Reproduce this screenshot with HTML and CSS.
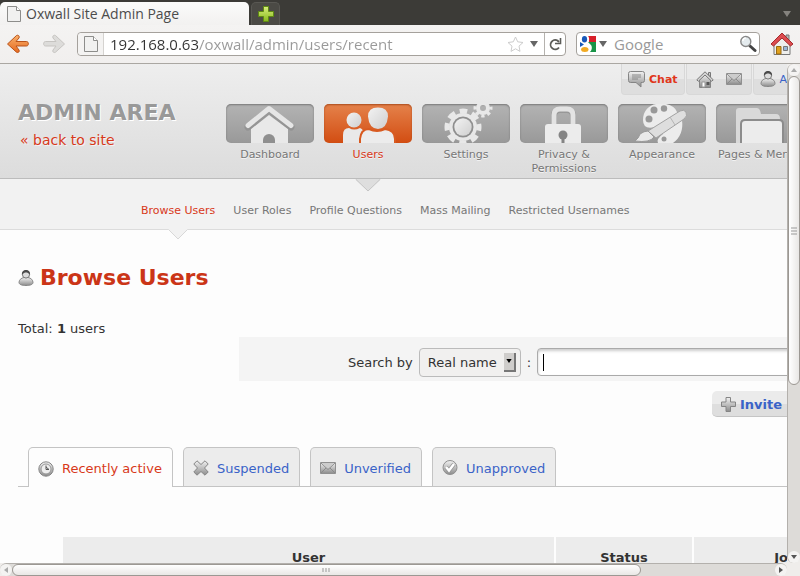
FILE: index.html
```html
<!DOCTYPE html>
<html lang="en">
<head>
<meta charset="utf-8">
<title>Oxwall Site Admin Page</title>
<link rel="stylesheet" href="styles.css">
</head>
<body>
<svg class="defs" aria-hidden="true">
  <defs>
    <linearGradient id="grey" x1="0" y1="0" x2="0" y2="1"><stop offset="0" stop-color="#f2f2f2"/><stop offset="1" stop-color="#8c8c8c"/></linearGradient>
    <linearGradient id="pale" x1="0" y1="0" x2="1" y2="1"><stop offset="0" stop-color="#f3f3f3"/><stop offset="1" stop-color="#cfcfcf"/></linearGradient>
    <linearGradient id="orange" x1="0" y1="0" x2="0" y2="1"><stop offset="0" stop-color="#f9b06b"/><stop offset="1" stop-color="#e66a20"/></linearGradient>
    <linearGradient id="lime" x1="0" y1="0" x2="0" y2="1"><stop offset="0" stop-color="#d8ee7c"/><stop offset="1" stop-color="#86b81c"/></linearGradient>
    <symbol id="sheet" viewBox="0 0 14 16"><path d="M.5.5h9l4 4v11H.5z" fill="#f1f1f0" stroke="#8d8d8b"/><path d="M9.500.5v4h4" fill="#fff" stroke="#8d8d8b"/></symbol>
    <symbol id="person" viewBox="0 0 16 18"><path d="M1 13.500c0-2.500 2-4.500 5-5h4c3 .5 5 2.500 5 5 0 2-3 3-7 3s-7-1-7-3z" fill="url(#grey)" stroke="#888"/><circle cx="8" cy="5.500" r="3.600" fill="#dcdcdc" stroke="#777"/><path d="M4 6C3.500 2.500 5.500 1 8 1s4.500 1.500 4 5C11 4 9 3.500 8 3.500S5 4 4 6z" fill="#4b4b4b"/></symbol>
    <symbol id="mail" viewBox="0 0 16 12"><path d="M.5.5h15v11H.5z" fill="url(#grey)" stroke="#909090"/><path d="M1 1l7 6.500L15 1M1 11l5-5M15 11l-5-5" fill="none" stroke="#8a8a8a"/><path d="M1.500 1h13L8 6.500z" fill="#ccc"/></symbol>
    <symbol id="down" viewBox="0 0 8 6"><path d="M0 0h8L4 6z" fill="currentColor"/></symbol>
  </defs>
</svg>

<div class="titlebar">
  <div class="window-tab"><svg width="14" height="16"><use href="#sheet"/></svg><span>Oxwall Site Admin Page</span></div>
  <button class="new-tab" aria-label="New tab"><svg width="16" height="16" viewBox="0 0 16 16"><path d="M5.500.5h5v5h5v5h-5v5h-5v-5h-5v-5h5z" fill="url(#lime)" stroke="#5f8a12"/></svg></button>
  <button class="all-tabs" aria-label="List all tabs"><svg width="8" height="6"><use href="#down"/></svg></button>
</div>

<div class="toolbar">
  <button class="plain" aria-label="Back"><svg width="24" height="20" viewBox="0 0 24 20"><path d="M10.500 1.500c1.500-1 3.500.7 2.500 2.500L10 7.500h10.500c2.500 0 2.500 4.500 0 4.500H10l3 4c1 1.800-1 3.200-2.500 2.200L1.500 10z" fill="url(#orange)" stroke="#b9531a"/></svg></button>
  <button class="plain forward" aria-label="Forward"><svg width="24" height="20" viewBox="0 0 24 20"><path d="M13.500 1.500c-1.500-1-3.500.7-2.500 2.500l3 3.500H3.500C1 7.500 1 12 3.500 12H14l-3 4c-1 1.800 1 3.200 2.500 2.200l9-8.200z" fill="#dddcda" stroke="#c6c4c1"/></svg></button>
  <form class="address">
    <span class="identity"><svg width="14" height="16"><use href="#sheet"/></svg></span>
    <input class="url" type="text" aria-label="Address" value="192.168.0.63/oxwall/admin/users/recent">
    <button type="button" class="plain" aria-label="Bookmark this page"><svg width="17" height="16" viewBox="0 0 17 16"><path d="M8.500 1l2.200 4.800 5.300.7-4 3.600 1 5.300-4.500-2.600L4 15.400l1-5.300-4-3.600 5.300-.7z" fill="#fff" stroke="#ccc"/></svg></button>
    <button type="button" class="plain" aria-label="Show history"><svg width="8" height="6"><use href="#down"/></svg></button>
    <button type="button" class="reload" aria-label="Reload"><svg width="13" height="14" viewBox="0 0 13 14"><path d="M10 10.500A4.700 4.700 0 1 1 8.500 3.500L10 5" fill="none" stroke="#5c5c58" stroke-width="1.800"/><path d="M11.500 1v5.500H6" fill="none" stroke="#5c5c58" stroke-width="1.600"/></svg></button>
  </form>
  <form class="web-search">
    <button type="button" class="plain engine" aria-label="Choose search engine"><svg width="16" height="16" viewBox="0 0 16 16"><path fill="#fff" d="M0 0h16v16H0z"/><path d="M8 0h8v6H9z" fill="#d8202a"/><path d="M8 6h8v10H8z" fill="#189447"/><path d="M8 0c2 3 1 5 0 6l3 3c2 3 0 6-1 7H7l1-5-4-3 3-2z" fill="#fff"/><ellipse cx="4.500" cy="3.200" rx="2.600" ry="3.200" fill="#1858b8"/><path d="M0 6l4 2.500L0 11z" fill="#1858b8"/><ellipse cx="4.800" cy="13.500" rx="3.700" ry="2.500" fill="#f2aa22"/></svg><svg width="8" height="6"><use href="#down"/></svg></button>
    <input type="text" aria-label="Search the web" placeholder="Google">
    <button type="button" class="plain" aria-label="Search"><svg width="18" height="18" viewBox="0 0 18 18"><path d="M11 11l5 4.500" stroke="#444" stroke-width="3" stroke-linecap="round"/><circle cx="6.800" cy="6.500" r="5" fill="#e4ebee" stroke="#888" stroke-width="1.400"/><path d="M3.800 6a3 3 0 0 1 3-3" fill="none" stroke="#fff" stroke-width="1.500"/></svg></button>
  </form>
  <button class="plain home" aria-label="Home"><svg width="24" height="24" viewBox="0 0 24 24"><path d="M16 3h3v6h-3z" fill="#b8b8b4" stroke="#777"/><path d="M4 11l8-8 8 8v11.500H4z" fill="#eeeeec" stroke="#777"/><path d="M6.500 14.500h4.500V22H6.500z" fill="#e0a01c" stroke="#9a6a10"/><path d="M13.500 14.500h4v4h-4z" fill="#9ab6d8" stroke="#777"/><path d="M12 1L1 12l2.500 2L12 6l8.500 8 2.500-2z" fill="#dc4b4f" stroke="#a52a2c"/></svg></button>
</div>

<div class="window">
  <div class="viewport">
    <div class="page">
      <header class="header">
        <div class="console">
          <div class="console-box"><svg width="17" height="17" viewBox="0 0 17 17"><path d="M2.500.5h12q2 0 2 2v7q0 2-2 2H13V16l-5-4.500H2.500q-2 0-2-2v-7q0-2 2-2z" fill="url(#grey)" stroke="#858585"/><path d="M4 4h9M4 6h9M4 8h6" stroke="#888"/></svg><a class="chat" href="#">Chat</a></div>
          <div class="console-box icons">
            <a href="#" aria-label="Home"><svg width="18" height="17" viewBox="0 0 18 17"><path d="M3.500 8v8.500h11V8L9 3z" fill="url(#grey)" stroke="#858585"/><path d="M12.500 1.500h2V6l-2-2z" fill="#ccc" stroke="#777"/><path d="M9 .8L.8 8.800l1.500 1.500L9 4l6.700 6.300 1.500-1.500z" fill="#d5d5d5" stroke="#777"/><path d="M6 11h3v5H6z" fill="#fff" stroke="#999"/><path d="M10.500 11h3v3h-3z" fill="#555"/></svg></a>
            <a href="#" aria-label="Messages"><svg width="16" height="12"><use href="#mail"/></svg></a>
          </div>
          <div class="console-box"><svg width="16" height="18"><use href="#person"/></svg><a href="#">Admin</a></div>
        </div>
        <div class="masthead">
          <div class="brand">
            <div class="brand-name">ADMIN AREA</div>
            <a href="#">« back to site</a>
          </div>
          <nav class="main-nav">
            <a href="#"><span class="tile"><svg width="88" height="39" viewBox="0 0 88 39"><path d="M25 39V25L43 11l19 14v14z" fill="#e9e9e9"/><path d="M22 23L43 6l22 17" fill="none" stroke="#818181" stroke-width="7" stroke-linecap="round" stroke-linejoin="round" opacity=".45"/><path d="M22 21.500L43 4.500l22 17" fill="none" stroke="#e6e6e6" stroke-width="5" stroke-linecap="round" stroke-linejoin="round"/><path d="M37 39v-3a6 6 0 0 1 12 0v3z" fill="#8f8f8f"/></svg></span>Dashboard</a>
            <a href="#" class="current"><span class="tile"><svg width="88" height="39" viewBox="0 0 88 39"><circle cx="30" cy="16" r="7.500" fill="url(#pale)"/><path d="M19 39v-8q0-7 6-7 5 3 11 0 4 1 4 8v7z" fill="#e9e9e9"/><path d="M36 40v-5q1-10 9-10 8 4 16 0 10 1 10 10v5z" fill="#ececec" stroke="#d85a20" stroke-width="2"/><path d="M54 3.500q10 0 10 9-1 12-10 12.500-9-.5-10-12.500 0-9 10-9z" fill="url(#pale)"/></svg></span>Users<svg class="pointer" width="26" height="13" viewBox="0 0 26 13"><path d="M0 0h26L13 12z" fill="#dedede"/><path d="M1 .5L13 12 25 .5" fill="none" stroke="#c4c4c4"/></svg></a>
            <a href="#"><span class="tile"><svg width="88" height="42" viewBox="0 -3 88 42"><circle cx="41" cy="23" r="14" fill="#e8e8e8"/><circle cx="41" cy="23" r="16" fill="none" stroke="#e8e8e8" stroke-width="5" stroke-dasharray="7.560 5" stroke-dashoffset="3.780"/><circle cx="41" cy="23" r="10.500" fill="#8f8f8f"/><circle cx="41" cy="23" r="8.700" fill="url(#pale)"/><circle cx="61" cy="4" r="5" fill="none" stroke="#e8e8e8" stroke-width="4"/><circle cx="61" cy="4" r="8" fill="none" stroke="#e8e8e8" stroke-width="3" stroke-dasharray="3.280 3" stroke-dashoffset="1.640"/></svg></span>Settings</a>
            <a href="#"><span class="tile"><svg width="88" height="39" viewBox="0 0 88 39"><path d="M34 22V12q0-6 6-6h7q6 0 6 6v10" fill="none" stroke="#818181" stroke-width="6" opacity=".5"/><path d="M34 21V11q0-6 6-6h7q6 0 6 6v10" fill="none" stroke="#e3e3e3" stroke-width="5"/><path d="M25 39V23q0-3 3-3h30q3 0 3 3v16z" fill="#ececec"/><circle cx="43" cy="31" r="4.500" fill="#858585"/><path d="M41.500 33h3v6h-3z" fill="#858585"/></svg></span>Privacy &amp; Permissions</a>
            <a href="#"><span class="tile"><svg width="88" height="39" viewBox="0 0 88 39"><path d="M25 16C25 7 31 1 38 0h10q9 2 11 8l5 8q2 15-9 23H40q-2-4 5-9l-8-7q-12 3-12-7z" fill="#ececec"/><circle cx="36" cy="6" r="3.500" fill="#999"/><circle cx="46" cy="4.500" r="3.200" fill="#999"/><circle cx="31" cy="15" r="3.500" fill="#999"/><circle cx="46" cy="35" r="2.500" fill="#999"/><path d="M68 8q2 4-2 7L38 34l-8-7L62 7q4-2 6 1z" fill="#dedede" stroke="#a2a2a2"/><path d="M52 13l5 8" stroke="#b5b5b5"/><path d="M30 27l6 6q-4 6-19 4 4-3 5-7 4-3 8-3z" fill="#e9e9e9" stroke="#999"/></svg></span>Appearance</a>
            <a href="#" class="single-line"><span class="tile"><svg width="88" height="39" viewBox="0 0 88 39"><path d="M20 39V7q0-3 3-3h18q3 0 4 6h15q4 0 4 5v24z" fill="#d9d9d9"/><path d="M25 40V20q0-4 4-4h34q4 0 4 4v20z" fill="#ececec" stroke="#8c8c8c" stroke-width="2"/></svg></span>Pages &amp; Menus</a>
          </nav>
        </div>
      </header>

      <nav class="sub-nav">
        <a href="#" class="current">Browse Users<svg class="pointer" width="20" height="11" viewBox="0 0 20 11"><path d="M0 0h20L10 10z" fill="#f2f2f2"/><path d="M.5.5L10 10 19.500.5" fill="none" stroke="#d8d8d8"/></svg></a>
        <a href="#">User Roles</a>
        <a href="#">Profile Questions</a>
        <a href="#">Mass Mailing</a>
        <a href="#">Restricted Usernames</a>
      </nav>

      <main class="content">
        <h1><svg width="16" height="18"><use href="#person"/></svg>Browse Users</h1>
        <p class="total">Total: <b>1</b> users</p>
        <form class="search">
          <label for="field">Search by</label>
          <span class="select-wrap">
            <select id="field"><option>Real name</option></select>
            <span class="select-arrow"><svg width="6" height="4"><use href="#down" width="6" height="4"/></svg></span>
          </span>
          <label for="query">:</label>
          <span class="query-wrap"><input id="query" type="text"><span class="caret"></span></span>
        </form>
        <div class="actions">
          <button class="invite"><svg width="15" height="15" viewBox="0 0 15 15"><path d="M5 .5h4.500V5h5v4.500h-5v5H5v-5H.5V5H5z" fill="url(#grey)" stroke="#858585"/></svg>Invite Users</button>
        </div>
        <nav class="tabs">
          <a href="#" class="active"><svg width="16" height="16" viewBox="0 0 16 16"><circle cx="8" cy="8" r="7.200" fill="url(#grey)" stroke="#858585"/><circle cx="8" cy="8" r="5" fill="#eee" stroke="#999"/><path d="M8 4.500v4h3L8 6" fill="none" stroke="#555"/></svg>Recently active</a>
          <a href="#"><svg width="16" height="16" viewBox="0 0 16 16"><path d="M4 .8L8 4.500 12 .8 15.200 4 11.500 8l3.700 4-3.200 3.200-4-3.700-4 3.700L.8 12l3.700-4L.8 4z" fill="url(#grey)" stroke="#858585" stroke-linejoin="round"/></svg>Suspended</a>
          <a href="#"><svg width="16" height="12"><use href="#mail"/></svg>Unverified</a>
          <a href="#"><svg width="16" height="16" viewBox="0 0 16 16"><circle cx="8" cy="7.500" r="7" fill="url(#grey)" stroke="#909090"/><path d="M4 7l3 3.500L12 4" fill="none" stroke="#999" stroke-width="4"/><path d="M4 7l3 3.500L12 4" fill="none" stroke="#fff" stroke-width="2.400"/></svg>Unapproved</a>
        </nav>
        <table class="users">
          <thead><tr><th class="col-user">User</th><th class="col-status">Status</th><th class="col-joined">Joined</th></tr></thead>
        </table>
      </main>
    </div>
  </div>
  <div class="scroll vertical">
    <span class="end"><svg width="6" height="4" viewBox="0 0 6 4"><path d="M0 4l3-4 3 4z" fill="#aaa"/></svg></span>
    <span class="thumb"><svg width="6" height="8" viewBox="0 0 6 8"><path d="M0 1h6M0 4h6M0 7h6" stroke="#999"/></svg></span>
    <span class="track"></span>
    <span class="end"><svg width="6" height="4" viewBox="0 0 6 4"><path d="M0 0h6L3 4z" fill="#555"/></svg></span>
  </div>
  <div class="scroll horizontal">
    <span class="end"><svg width="4" height="6" viewBox="0 0 4 6"><path d="M4 0v6L0 3z" fill="#aaa"/></svg></span>
    <span class="thumb"><svg width="8" height="4" viewBox="0 0 8 4"><path d="M1 0v4M4 0v4M7 0v4" stroke="#999"/></svg></span>
    <span class="track"></span>
    <span class="end"><svg width="4" height="6" viewBox="0 0 4 6"><path d="M0 0v6l4-3z" fill="#555"/></svg></span>
  </div>
</div>
</body>
</html>
```
FILE: styles.css
```css
* { box-sizing: border-box; }
html, body { height: 100%; }
body {
  margin: 0;
  display: flex;
  flex-direction: column;
  overflow: hidden;
  background: #fdfdfd;
  color: #333;
  font-family: "DejaVu Sans", Verdana, sans-serif;
  font-size: 13px;
}
a { color: #3a63c8; text-decoration: none; }
svg { display: block; flex: none; }
button, input, select { font: inherit; color: inherit; margin: 0; padding: 0; }
.defs { position: absolute; width: 0; height: 0; }

/* Browser frame */
.titlebar {
  flex: none;
  display: flex;
  align-items: flex-end;
  gap: 2px;
  height: 25px;
  background: #3c3b37;
  font-family: "Open Sans", sans-serif;
  font-size: 14px;
}
.window-tab {
  display: flex;
  align-items: center;
  gap: 5px;
  width: 249px;
  height: 23px;
  padding-left: 7px;
  border-radius: 5px 5px 0 0;
  background: linear-gradient(#fbfbfa, #f2f1f0);
  color: #4c4c4c;
}
.new-tab, .all-tabs, .plain, .reload { border: 0; background: none; display: flex; align-items: center; justify-content: center; }
.new-tab {
  width: 29px;
  height: 23px;
  border: 1px solid #595853;
  border-bottom: 0;
  border-radius: 5px 5px 0 0;
  background: #4b4a45;
}
.all-tabs { margin-left: auto; width: 27px; height: 23px; color: #85837e; }
.toolbar {
  flex: none;
  display: flex;
  align-items: center;
  height: 39px;
  padding: 0 6px;
  border-bottom: 1px solid #aaa7a2;
  background: linear-gradient(#f4f3f2, #f1efee);
  font-family: "Open Sans", sans-serif;
  font-size: 15px;
  color: #666;
}
.forward { margin: 0 11px 0 12px; }
.address, .web-search {
  display: flex;
  align-items: center;
  height: 24px;
  border: 1px solid #a5a19c;
  border-radius: 4px;
  background: #fff;
}
.address { flex: 1; gap: 6px; margin-right: 10px; }
.identity {
  display: flex;
  align-items: center;
  justify-content: center;
  align-self: stretch;
  width: 26px;
  border-right: 1px solid #d5d3d0;
  border-radius: 4px 0 0 4px;
  background: #f4f3f2;
}
.address input, .web-search input { flex: 1; min-width: 0; height: 22px; border: 0; outline: 0; background: none; }
.address .url {
  background: linear-gradient(to right, #333 88px, #999 88px);
  background-clip: text;
  -webkit-background-clip: text;
  color: transparent;
}
.reload { align-self: stretch; width: 21px; border-left: 1px solid #b5b2ae; }
.web-search { width: 184px; padding: 0 2px 0 3px; gap: 7px; }
.engine { gap: 3px; }
.web-search input::placeholder { color: #999; opacity: 1; }
.home { margin-left: 10px; }

.window {
  flex: 1;
  min-height: 0;
  display: grid;
  grid-template: minmax(0, 1fr) 13px / minmax(0, 1fr) 13px;
  background: #efedeb;
}
.viewport { overflow: hidden; background: #fdfdfd; }
.page { min-width: 969px; }

/* Scrollbars */
.scroll { display: flex; background: #dddbd8; border: 1px solid #b3b0ac; border-radius: 7px; }
.vertical { flex-direction: column; border-width: 0 0 0 1px; }
.horizontal { border-width: 1px 0 0; }
.end { flex: none; display: flex; align-items: center; justify-content: center; width: 12px; height: 12px; border-radius: 6px; background: #f4f3f2; }
.thumb { display: flex; align-items: center; justify-content: center; border: 1px solid #9c9893; border-radius: 6px; background: #f3f2f0; }
.vertical .thumb { flex: 65; background: linear-gradient(to right, #fff, #e9e7e5); }
.vertical .track { flex: 35; }
.horizontal .thumb { flex: 14; background: linear-gradient(#fff, #e9e7e5); }
.horizontal .track { flex: 3; }

/* Site header */
.header { height: 115px; border-bottom: 1px solid #bcbcbc; background: linear-gradient(#eeeeee, #dcdcdc); }
.console { display: flex; gap: 1px; margin-left: 621px; height: 31px; font-size: 11px; }
.console-box {
  display: flex;
  align-items: center;
  gap: 4px;
  padding: 0 6px;
  border: 1px solid #d8d8d8;
  border-top: 0;
  border-radius: 0 0 4px 4px;
  background: linear-gradient(#e9e9e9 50%, #dedede 50%);
}
.icons { gap: 12px; padding: 0 9px; }
.chat { color: #e0361a; font-weight: bold; }
.masthead { display: flex; padding: 4px 0 0 18px; }
.brand { width: 203px; }
.brand-name { font-size: 22px; font-weight: bold; line-height: 28px; color: #999; text-shadow: 1px 1px #fff; }
.brand a { display: block; padding-left: 2px; font-size: 14px; line-height: 26px; color: #d8391a; text-shadow: 1px 1px #f4f4f4; }
.main-nav { display: flex; padding-top: 5px; }
.main-nav a {
  position: relative;
  width: 98px;
  height: 75px;
  padding: 0 5px;
  font-size: 11px;
  line-height: 14px;
  text-align: center;
  color: #777;
  text-shadow: 0 1px #f4f4f4;
}
.main-nav .single-line { white-space: nowrap; }
.main-nav .current { color: #d8391a; }
.tile {
  display: flex;
  align-items: flex-end;
  height: 39px;
  margin-bottom: 5px;
  border-radius: 5px;
  background: linear-gradient(#b3b3b3, #999);
  box-shadow: inset 0 1px 2px #777;
}
.current .tile { background: linear-gradient(#e5824b, #d24d12); box-shadow: inset 0 1px 2px #a84a1c; }
.pointer { position: absolute; left: 50%; transform: translateX(-50%); top: 100%; }
.sub-nav {
  display: flex;
  gap: 18px;
  height: 51px;
  padding: 0 141px;
  border-bottom: 1px solid #dcdcdc;
  background: #f2f2f2;
  font-size: 11px;
  line-height: 64px;
  white-space: nowrap;
}
.sub-nav a { position: relative; height: 50px; color: #777; }
.sub-nav .current { color: #d8391a; }

/* Content */
.content { padding: 32px 18px 0; }
h1 { display: flex; align-items: center; gap: 6px; margin: 0; font-size: 22px; line-height: 32px; color: #cb3517; }
.total { margin: 26px 0 0; line-height: 17px; }
.search {
  display: flex;
  align-items: center;
  gap: 6px;
  height: 44px;
  margin: 0 0 10px 221px;
  padding: 6px 8px 0 109px;
  background: #f4f4f4;
}
.select-wrap, .query-wrap { position: relative; }
.select-wrap { display: flex; }
.select-wrap select {
  appearance: none;
  width: 102px;
  height: 29px;
  padding-left: 8px;
  border: 1px solid #bbb;
  border-radius: 4px;
  background: #f1f0ef;
}
.select-arrow {
  position: absolute;
  top: 5px;
  right: 5px;
  display: flex;
  align-items: center;
  justify-content: center;
  width: 12px;
  height: 19px;
  border-right: 2px solid #777;
  border-bottom: 2px solid #777;
  background: #cfcdcb;
  color: #000;
  pointer-events: none;
}
.query-wrap { flex: 1; }
.query-wrap input {
  display: block;
  width: 100%;
  height: 28px;
  padding: 0 6px;
  border: 1px solid #aaa;
  border-radius: 4px;
  background: #fff;
  box-shadow: inset 0 2px 3px #ccc;
}
.caret { position: absolute; left: 6px; top: 6px; width: 1px; height: 17px; background: #000; }
.actions { display: flex; }
.invite {
  display: flex;
  align-items: center;
  gap: 4px;
  height: 26px;
  margin-left: 694px;
  padding: 1px 9px 0;
  border: 0;
  border-bottom: 1px solid #c5c5c5;
  border-radius: 5px;
  background: linear-gradient(#ebebeb 50%, #dedede 50%);
  font-weight: bold;
  color: #3a63c8;
}
.tabs { display: flex; gap: 10px; margin-top: 30px; padding-left: 10px; border-bottom: 1px solid #c4c4c4; }
.tabs a {
  display: flex;
  align-items: center;
  gap: 8px;
  height: 39px;
  padding: 2px 10px 0 9px;
  border: 1px solid #c4c4c4;
  border-bottom: 0;
  border-radius: 5px 5px 0 0;
  background: #ececec;
}
.tabs .active { height: 40px; margin-bottom: -1px; background: #fdfdfd; color: #d8391a; }
.users { margin: 50px 0 0 45px; border-spacing: 0; table-layout: fixed; width: 839px; }
.users th { height: 41px; padding: 0; border-right: 2px solid #fdfdfd; background: #ececec; }
.col-user { width: 493px; }
.col-status { width: 138px; }
```
